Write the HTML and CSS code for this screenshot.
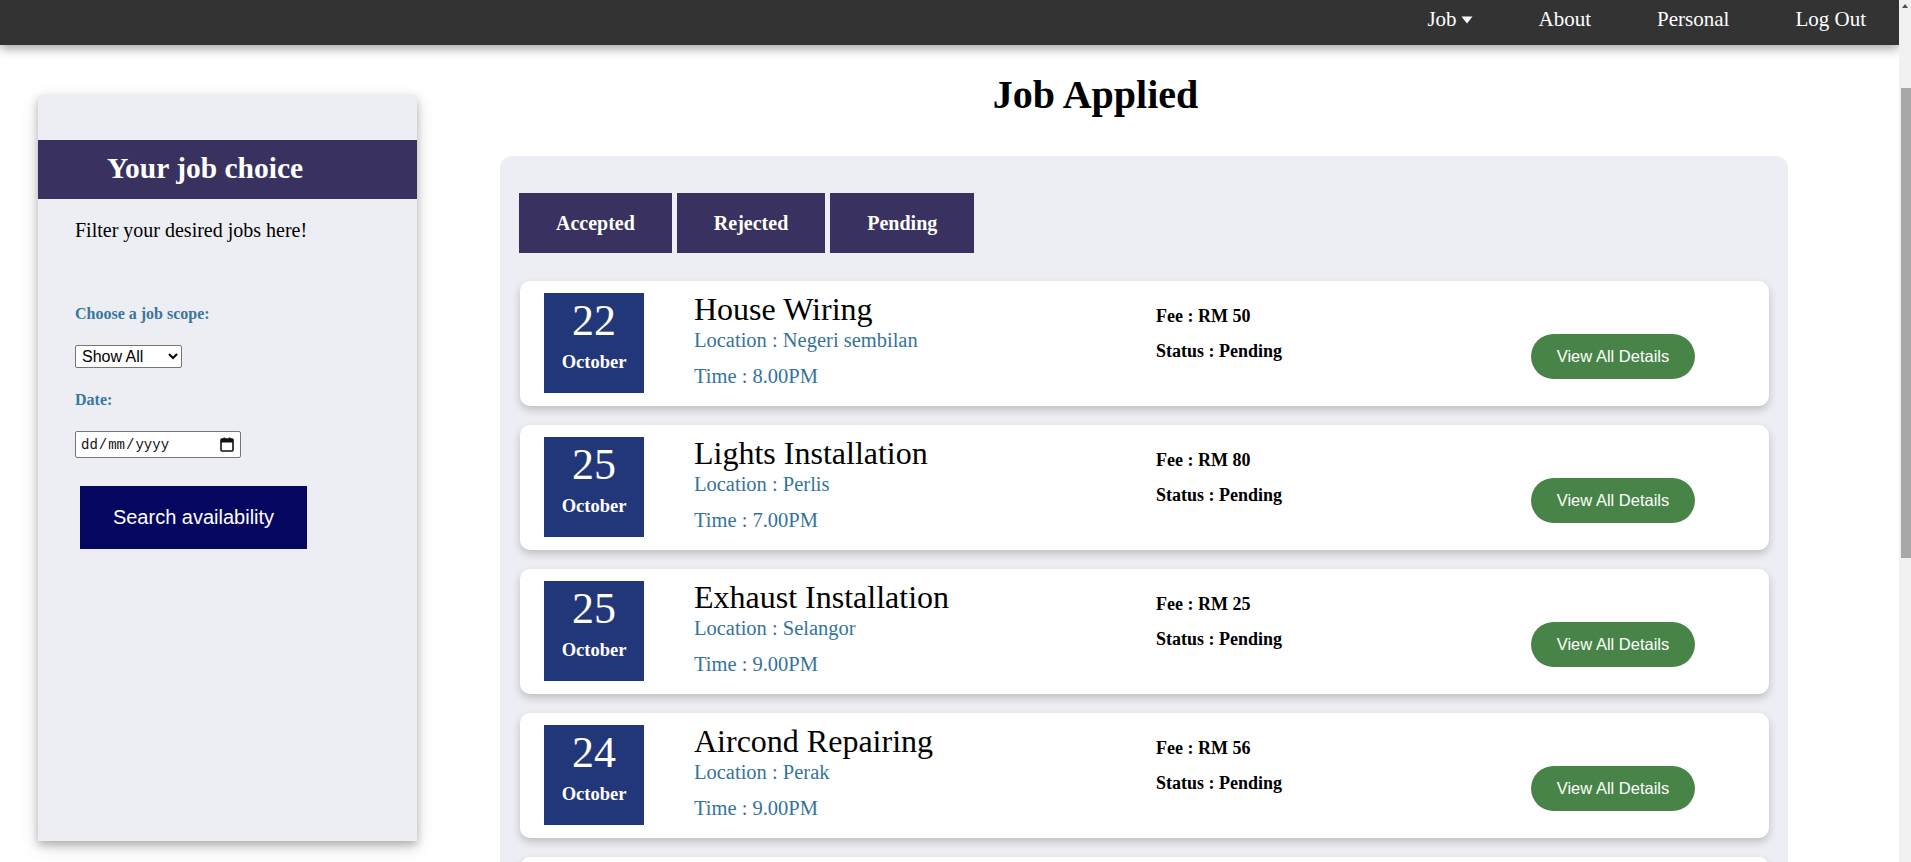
FILE: index.html
```html
<!DOCTYPE html>
<html lang="en">
<head>
<meta charset="utf-8">
<title>Job Applied</title>
<link rel="stylesheet" href="styles.css">
</head>
<body>
<div class="scrollbar" aria-hidden="true">
  <span class="sb-arrow"></span>
  <span class="sb-thumb"></span>
</div>

<nav class="topnav">
  <a class="nav-item" href="#">Job <svg class="caret" width="12" height="8" viewBox="0 0 12 8"><path d="M0.5 0.5 H11.5 L6 7.5 Z" fill="#fff"/></svg></a>
  <a class="nav-item" href="#">About</a>
  <a class="nav-item" href="#">Personal</a>
  <a class="nav-item" href="#">Log Out</a>
</nav>

<div class="page">
  <aside class="filter">
    <h2 class="filter-title">Your job choice</h2>
    <p class="filter-intro">Filter your desired jobs here!</p>
    <label class="filter-label">Choose a job scope:</label>
    <select class="scope-select"><option>Show All</option></select>
    <label class="filter-label filter-label-date">Date:</label>
    <div class="date-field">
      <span class="date-text">dd<span class="slash">/</span>mm<span class="slash">/</span>yyyy</span>
      <svg class="cal-icon" width="14" height="15" viewBox="0 0 14 15"><rect x="1" y="2" width="12" height="12" rx="1" fill="none" stroke="#111" stroke-width="1.6"/><rect x="1" y="2" width="12" height="3.5" fill="#111"/><rect x="3.5" y="0.5" width="1.6" height="3" fill="#111"/><rect x="8.9" y="0.5" width="1.6" height="3" fill="#111"/></svg>
    </div>
    <button class="search-btn">Search availability</button>
  </aside>

  <main class="main">
    <h1 class="page-title">Job Applied</h1>
    <section class="jobs-panel">
      <div class="tabs">
        <button class="tab">Accepted</button>
        <button class="tab">Rejected</button>
        <button class="tab">Pending</button>
      </div>
      <div class="job-list">
        <div class="job-card">
          <div class="date-box"><div class="day">22</div><div class="month">October</div></div>
          <div class="job-info">
            <h3 class="job-title">House Wiring</h3>
            <p class="job-meta">Location : Negeri sembilan</p>
            <p class="job-meta job-time">Time : 8.00PM</p>
          </div>
          <div class="job-status">
            <p class="fee">Fee : RM 50</p>
            <p class="status">Status : Pending</p>
          </div>
          <button class="details-btn">View All Details</button>
        </div>
        <div class="job-card">
          <div class="date-box"><div class="day">25</div><div class="month">October</div></div>
          <div class="job-info">
            <h3 class="job-title">Lights Installation</h3>
            <p class="job-meta">Location : Perlis</p>
            <p class="job-meta job-time">Time : 7.00PM</p>
          </div>
          <div class="job-status">
            <p class="fee">Fee : RM 80</p>
            <p class="status">Status : Pending</p>
          </div>
          <button class="details-btn">View All Details</button>
        </div>
        <div class="job-card">
          <div class="date-box"><div class="day">25</div><div class="month">October</div></div>
          <div class="job-info">
            <h3 class="job-title">Exhaust Installation</h3>
            <p class="job-meta">Location : Selangor</p>
            <p class="job-meta job-time">Time : 9.00PM</p>
          </div>
          <div class="job-status">
            <p class="fee">Fee : RM 25</p>
            <p class="status">Status : Pending</p>
          </div>
          <button class="details-btn">View All Details</button>
        </div>
        <div class="job-card">
          <div class="date-box"><div class="day">24</div><div class="month">October</div></div>
          <div class="job-info">
            <h3 class="job-title">Aircond Repairing</h3>
            <p class="job-meta">Location : Perak</p>
            <p class="job-meta job-time">Time : 9.00PM</p>
          </div>
          <div class="job-status">
            <p class="fee">Fee : RM 56</p>
            <p class="status">Status : Pending</p>
          </div>
          <button class="details-btn">View All Details</button>
        </div>
        <div class="job-card">
          <div class="date-box"><div class="day">27</div><div class="month">October</div></div>
          <div class="job-info">
            <h3 class="job-title">Fan Installation</h3>
            <p class="job-meta">Location : Johor</p>
            <p class="job-meta job-time">Time : 3.00PM</p>
          </div>
          <div class="job-status">
            <p class="fee">Fee : RM 40</p>
            <p class="status">Status : Pending</p>
          </div>
          <button class="details-btn">View All Details</button>
        </div>
      </div>
    </section>
  </main>
</div>
</body>
</html>
```

FILE: styles.css
```css
body {
  margin: 0 12px 0 0;
  font-family: "Liberation Serif", "Times New Roman", serif;
  color: #000;
  background: #fff;
}

/* window scrollbar look */
.scrollbar {
  position: fixed;
  top: 0;
  right: 0;
  width: 12px;
  height: 100vh;
  background: #f1f1f1;
  z-index: 5;
  display: flex;
  flex-direction: column;
  align-items: flex-end;
}
.sb-arrow {
  width: 0;
  height: 0;
  margin: 4px 3px 0 0;
  border-left: 3px solid transparent;
  border-right: 3px solid transparent;
  border-bottom: 4px solid #505050;
}
.sb-thumb {
  width: 10px;
  height: 470px;
  margin-top: 80px;
  background: #a8a8a8;
}

/* top navigation */
.topnav {
  height: 45px;
  background: #333333;
  display: flex;
  justify-content: flex-end;
  box-shadow: 0 4px 10px rgba(0, 0, 0, 0.35);
  position: relative;
  z-index: 2;
}
.nav-item {
  color: #fff;
  text-decoration: none;
  font-size: 21px;
  line-height: 39px;
  padding: 0 33px;
  display: flex;
  align-items: baseline;
}
.caret {
  margin-left: 4px;
  align-self: center;
  margin-top: -5px;
}

/* layout */
.page {
  display: flex;
  align-items: flex-start;
}

/* sidebar */
.filter {
  width: 379px;
  height: 746px;
  box-sizing: border-box;
  margin: 50px 0 0 38px;
  padding: 45px 0 0 0;
  background: #edeef3;
  border-radius: 4px 4px 0 0;
  box-shadow: 0 4px 8px 0 rgba(0, 0, 0, 0.25), 0 6px 20px 0 rgba(0, 0, 0, 0.12);
  flex-shrink: 0;
}
.filter-title {
  margin: 0;
  height: 59px;
  box-sizing: border-box;
  padding-left: 69px;
  line-height: 56px;
  font-size: 29.5px;
  font-weight: bold;
  color: #fff;
  background: #393260;
}
.filter-intro {
  margin: 20px 0 0 37px;
  font-size: 20px;
  line-height: 23px;
}
.filter-label {
  display: block;
  margin: 63px 0 0 37px;
  font-size: 16px;
  line-height: 18px;
  font-weight: bold;
  color: #3a769c;
}
.filter-label-date {
  margin-top: 23px;
}
.scope-select {
  display: block;
  margin: 22px 0 0 37px;
  width: 107px;
  height: 23px;
  font-family: "Liberation Sans", Arial, sans-serif;
  font-size: 16px;
  border: 1px solid #767676;
  border-radius: 2px;
  background: #fff;
  color: #000;
  padding: 0 2px;
}
.date-field {
  margin: 22px 0 0 37px;
  width: 166px;
  height: 27px;
  box-sizing: border-box;
  border: 1px solid #767676;
  border-radius: 2px;
  background: #fff;
  display: flex;
  align-items: center;
  justify-content: space-between;
  padding: 0 6px 0 5px;
}
.date-text {
  font-family: "Liberation Mono", monospace;
  font-size: 14px;
  color: #111;
}
.slash {
  margin: 0 1px;
}
.search-btn {
  display: block;
  margin: 28px 0 0 42px;
  width: 227px;
  height: 63px;
  border: none;
  background: #05065f;
  color: #fff;
  font-family: "Liberation Sans", Arial, sans-serif;
  font-size: 20px;
  padding: 0;
}

/* main */
.main {
  margin-left: 83px;
  width: 1288px;
  flex-shrink: 0;
}
.page-title {
  margin: 26.5px 0 38.5px;
  padding-right: 97px;
  text-align: center;
  font-size: 40px;
  line-height: 46px;
  font-weight: bold;
}
.jobs-panel {
  background: #edeef3;
  border-radius: 12px;
  padding: 37px 19px 24px 20px;
}
.tabs {
  display: flex;
  gap: 5px;
  margin-left: -1px;
}
.tab {
  border: none;
  background: #393260;
  color: #fff;
  font-family: "Liberation Serif", "Times New Roman", serif;
  font-weight: bold;
  font-size: 20px;
  line-height: 60px;
  height: 60px;
  padding: 0 37px;
}
.job-list {
  margin-top: 28px;
  display: flex;
  flex-direction: column;
  gap: 19px;
}
.job-card {
  height: 125px;
  box-sizing: border-box;
  padding: 12px 0 13px 24px;
  background: #fff;
  border-radius: 10px;
  box-shadow: 0 4px 8px rgba(0, 0, 0, 0.2);
  display: flex;
  align-items: flex-start;
}
.date-box {
  width: 100px;
  height: 100px;
  background: #22367a;
  color: #fff;
  text-align: center;
  margin-right: 50px;
  flex-shrink: 0;
}
.day {
  padding-top: 3px;
  font-size: 44px;
  line-height: 50px;
}
.month {
  margin-top: 4px;
  font-size: 18.5px;
  line-height: 24px;
  font-weight: bold;
}
.job-info {
  width: 462px;
  flex-shrink: 0;
}
.job-title {
  margin: 0;
  font-size: 32px;
  line-height: 32px;
  font-weight: normal;
}
.job-meta {
  margin: 0;
  font-size: 20.5px;
  line-height: 31px;
  color: #35749a;
}
.job-time {
  margin-top: 5px;
}
.job-status {
  width: 375px;
  flex-shrink: 0;
}
.fee,
.status {
  margin: 11px 0 0;
  font-size: 18px;
  line-height: 24px;
  font-weight: bold;
}
.details-btn {
  margin-top: 41px;
  width: 164px;
  height: 45px;
  border: none;
  border-radius: 23px;
  background: #488448;
  color: #fff;
  font-family: "Liberation Sans", Arial, sans-serif;
  font-size: 16.5px;
  padding: 0;
}
```
